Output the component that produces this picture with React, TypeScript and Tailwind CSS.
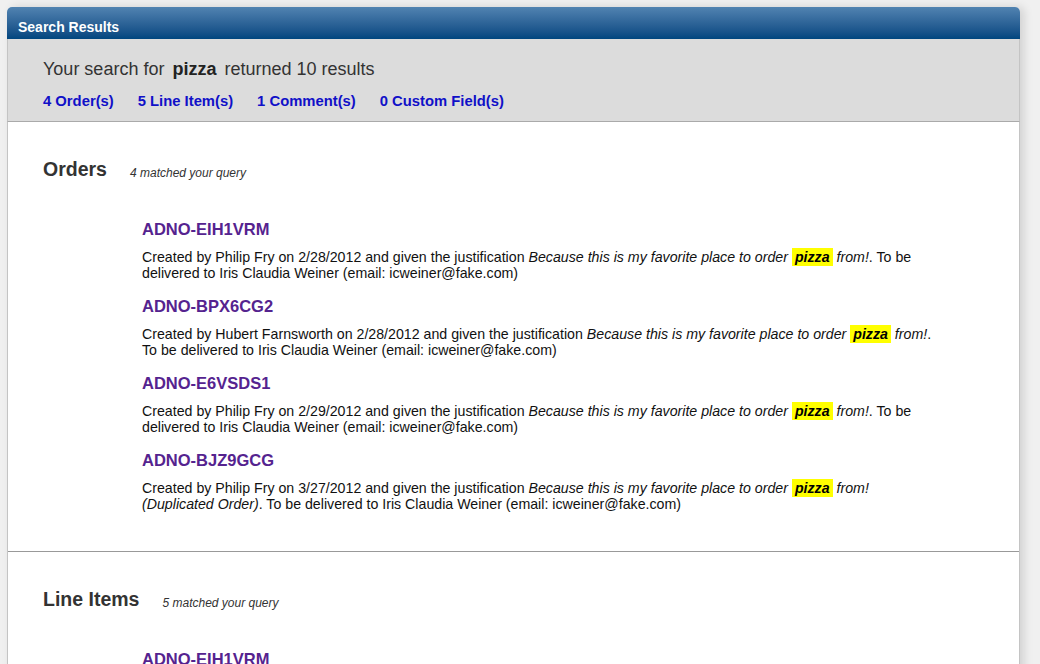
import React from 'react';

interface OrderHit {
  id: string;
  by: string;
  date: string;
  extra?: string;
}

const orders: OrderHit[] = [
  { id: 'ADNO-EIH1VRM', by: 'Philip Fry', date: '2/28/2012' },
  { id: 'ADNO-BPX6CG2', by: 'Hubert Farnsworth', date: '2/28/2012' },
  { id: 'ADNO-E6VSDS1', by: 'Philip Fry', date: '2/29/2012' },
  { id: 'ADNO-BJZ9GCG', by: 'Philip Fry', date: '3/27/2012', extra: ' (Duplicated Order)' },
];

const lineItems: OrderHit[] = [
  { id: 'ADNO-EIH1VRM', by: 'Philip Fry', date: '2/28/2012' },
  { id: 'ADNO-BPX6CG2', by: 'Hubert Farnsworth', date: '2/28/2012' },
];

const Hit = () => (
  <span className="bg-[#ffff00] px-[3px] py-[1px] font-bold italic text-black">pizza</span>
);

const ResultItem: React.FC<{ item: OrderHit }> = ({ item }) => (
  <div>
    <a href="#" className="block text-[16.5px] leading-[20px] font-bold text-[#55238f]">
      {item.id}
    </a>
    <p className="mt-[10px] text-[14.2px] leading-[16px] text-[#111]">
      Created by {item.by} on {item.date} and given the justification{' '}
      <i>
        Because this is my favorite place to order <Hit /> from!{item.extra}
      </i>
      . To be delivered to Iris Claudia Weiner (email: icweiner@fake.com)
    </p>
  </div>
);

const Section: React.FC<{ title: string; count: number; items: OrderHit[] }> = ({ title, count, items }) => (
  <section className="border-b border-[#999] pt-[35px] pb-[39px] pl-[35px]">
    <div className="flex items-end">
      <h2 className="text-[19.5px] leading-[24px] font-bold text-[#333]">{title}</h2>
      <span className="ml-[23px] text-[12px] leading-[16px] italic text-[#333]">{count} matched your query</span>
    </div>
    <div className="mt-[38px] ml-[99px] flex w-[798px] flex-col gap-[15px]">
      {items.map((item) => (
        <ResultItem key={item.id + title} item={item} />
      ))}
    </div>
  </section>
);

export default function App() {
  const counts = ['4 Order(s)', '5 Line Item(s)', '1 Comment(s)', '0 Custom Field(s)'];

  return (
    <div className="min-h-screen bg-[#f0f0f0] pt-[7px] pl-[7px] pr-[20px] font-['Liberation_Sans',Arial,sans-serif]">
      <div className="rounded-t-[5px] bg-white shadow-[4px_0_10px_rgba(0,0,0,0.13)]">
        {/* title bar */}
        <div className="h-[32px] rounded-t-[5px] bg-gradient-to-b from-[#5183b1] to-[#00467f] pl-[11px] pt-[12px] text-[14px] leading-[16px] font-bold text-white">
          Search Results
        </div>

        {/* summary */}
        <div className="border-x border-b border-x-[#c4c4c4] border-b-[#aaa] bg-[#dcdcdc] pt-[18px] pb-[12px] pl-[35px]">
          <div className="text-[18px] leading-[24px] text-[#333]">
            Your search for <b className="px-[3px] text-[#222]">pizza</b> returned 10 results
          </div>
          <div className="mt-[12px] flex gap-[24px] text-[14.8px] leading-[16px] font-bold text-[#1010c8]">
            {counts.map((c) => (
              <a key={c} href="#">
                {c}
              </a>
            ))}
          </div>
        </div>

        <div className="border-x border-[#c4c4c4]">
          <Section title="Orders" count={4} items={orders} />
          <Section title="Line Items" count={5} items={lineItems} />
        </div>
      </div>
    </div>
  );
}
